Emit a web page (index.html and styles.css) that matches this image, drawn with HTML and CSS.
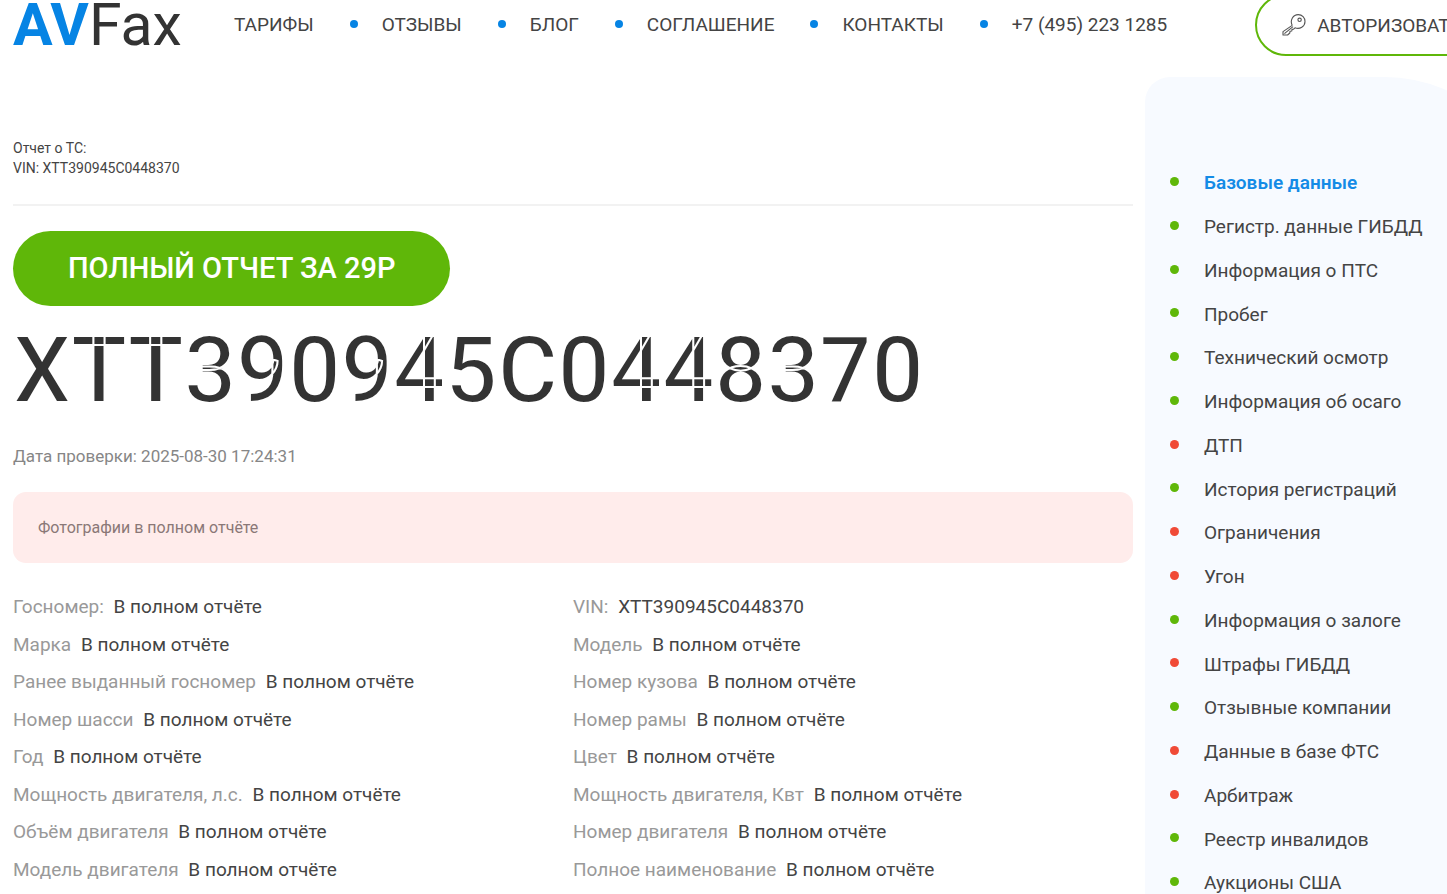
FILE: index.html
```html
<!DOCTYPE html>
<html lang="ru">
<head>
  <meta charset="UTF-8" />
  <meta name="viewport" content="width=device-width, initial-scale=1.0"/>
  <title>AVFax - Отчет XTT390945C0448370</title>
  <link rel="stylesheet" href="styles.css">
</head>
<body>
  <header class="header">
    <a href="#" class="logo"><b>AV</b>Fax</a>
    <nav class="nav">
      <a href="#">ТАРИФЫ</a>
      <a href="#">ОТЗЫВЫ</a>
      <a href="#">БЛОГ</a>
      <a href="#">СОГЛАШЕНИЕ</a>
      <a href="#">КОНТАКТЫ</a>
      <a href="tel:+74952231285">+7 (495) 223 1285</a>
    </nav>
    <button class="login-btn" type="button">
      <svg width="24" height="24" viewBox="0 0 24 24" fill="none" stroke="#555" stroke-width="1.1" stroke-linejoin="round">
        <path d="M10.2 12.4 C7.6 7.2 11.2 1.6 16.2 1.6 C20.2 1.6 23 4.8 23 8.4 C23 13.4 17.8 16.8 13 14.8 L11.6 16.2 L10 16.4 L9.8 18 L8 18.2 L7.8 20 L5.6 22 L1 22 L1 18.6 L10.2 12.4"/>
        <path d="M2.4 20.6 L11 13.6"/>
        <circle cx="17.6" cy="6.8" r="1.7"/>
      </svg>
      АВТОРИЗОВАТЬСЯ
    </button>
  </header>

  <div class="page">
    <main class="content">
      <div class="report-info">
        <p>Отчет о ТС:</p>
        <p>VIN: XTT390945C0448370</p>
      </div>

      <button class="buy-btn" type="button">ПОЛНЫЙ ОТЧЕТ ЗА 29Р</button>
      <h1>XTT390945C0448370</h1>
      <p class="check-date">Дата проверки: 2025-08-30 17:24:31</p>

      <div class="alert">Фотографии в полном отчёте</div>

      <ul class="specs">
        <li><span>Госномер:</span> В полном отчёте</li>
        <li><span>VIN:</span> XTT390945C0448370</li>
        <li><span>Марка</span> В полном отчёте</li>
        <li><span>Модель</span> В полном отчёте</li>
        <li><span>Ранее выданный госномер</span> В полном отчёте</li>
        <li><span>Номер кузова</span> В полном отчёте</li>
        <li><span>Номер шасси</span> В полном отчёте</li>
        <li><span>Номер рамы</span> В полном отчёте</li>
        <li><span>Год</span> В полном отчёте</li>
        <li><span>Цвет</span> В полном отчёте</li>
        <li><span>Мощность двигателя, л.с.</span> В полном отчёте</li>
        <li><span>Мощность двигателя, Квт</span> В полном отчёте</li>
        <li><span>Объём двигателя</span> В полном отчёте</li>
        <li><span>Номер двигателя</span> В полном отчёте</li>
        <li><span>Модель двигателя</span> В полном отчёте</li>
        <li><span>Полное наименование</span> В полном отчёте</li>
      </ul>
    </main>

    <aside class="sidebar">
      <ul class="menu">
        <li><a href="#" class="active">Базовые данные</a></li>
        <li><a href="#">Регистр. данные ГИБДД</a></li>
        <li><a href="#">Информация о ПТС</a></li>
        <li><a href="#">Пробег</a></li>
        <li><a href="#">Технический осмотр</a></li>
        <li><a href="#">Информация об осаго</a></li>
        <li class="red"><a href="#">ДТП</a></li>
        <li><a href="#">История регистраций</a></li>
        <li class="red"><a href="#">Ограничения</a></li>
        <li class="red"><a href="#">Угон</a></li>
        <li><a href="#">Информация о залоге</a></li>
        <li class="red"><a href="#">Штрафы ГИБДД</a></li>
        <li><a href="#">Отзывные компании</a></li>
        <li class="red"><a href="#">Данные в базе ФТС</a></li>
        <li class="red"><a href="#">Арбитраж</a></li>
        <li><a href="#">Реестр инвалидов</a></li>
        <li><a href="#">Аукционы США</a></li>
      </ul>
    </aside>
  </div>
</body>
</html>
```
FILE: styles.css
```css
* {
  box-sizing: border-box;
  margin: 0;
  padding: 0;
}
html {
  overflow: hidden;
}
body {
  font-family: Roboto, sans-serif;
  font-size: 19px;
  color: #444;
  background-color: #fff;
}
a {
  color: inherit;
  text-decoration: none;
}
ul {
  list-style: none;
}

/* header */
.header {
  display: flex;
  align-items: center;
  margin-top: -6px;
  padding-left: 13px;
  white-space: nowrap;
}
.logo {
  width: 221px;
  flex: none;
  font-size: 59px;
  line-height: 60px;
  color: #333;
}
.logo b {
  color: #0684e4;
}
.nav {
  display: flex;
  flex: none;
  padding-bottom: 2px;
}
.nav a {
  display: flex;
  align-items: center;
}
.nav a + a::before {
  content: "";
  width: 8px;
  height: 8px;
  margin: 0 24px 0 36px;
  border-radius: 50%;
  background-color: #0684e4;
}
.login-btn {
  display: flex;
  align-items: center;
  gap: 11px;
  flex: none;
  height: 62px;
  margin-left: 88px;
  padding: 0 26px 0 25px;
  border: 2px solid #5fb709;
  border-radius: 31px;
  background: none;
  font: inherit;
  color: #444;
  cursor: pointer;
}

/* layout */
.page {
  display: flex;
  gap: 12px;
  margin-top: 21px;
  padding-left: 13px;
}
.content {
  flex: 1;
}

/* report */
.report-info {
  padding: 61px 0 26px;
  border-bottom: 2px solid #f2f2f2;
  font-size: 14px;
  line-height: 20px;
}
.buy-btn {
  display: block;
  height: 75px;
  margin-top: 25px;
  padding: 0 55px 2px;
  border: none;
  border-radius: 38px;
  background-color: #5fb709;
  font: 500 29px Roboto, sans-serif;
  color: #fff;
  cursor: pointer;
}
h1 {
  margin-top: 10px;
  font-size: 92px;
  font-weight: 500;
  line-height: 110px;
  color: #333;
  -webkit-text-stroke: 2px #fff;
}
.check-date {
  margin-top: 18px;
  font-size: 17px;
  line-height: 24px;
  color: #868686;
}
.alert {
  margin: 24px 0 25px;
  padding: 23px 25px;
  border-radius: 13px;
  background-color: #ffeceb;
  font-size: 16px;
  line-height: 25px;
  color: #8a7877;
}
.specs {
  display: grid;
  grid-template-columns: 1fr 1fr;
  grid-auto-rows: 38px 37px;
  line-height: 37px;
}
.specs span {
  margin-right: 5px;
  color: #999;
}

/* sidebar */
.sidebar {
  flex: none;
  width: 390px;
  margin-right: -88px;
  padding: 84px 25px 60px;
  border-radius: 25px 150px 0 0;
  background-color: #f7faff;
}
.menu {
  display: grid;
  grid-auto-rows: 44px 44px 44px 43px;
  line-height: 44px;
}
.menu li {
  display: flex;
  align-items: center;
  gap: 25px;
}
.menu li::before {
  content: "";
  width: 9px;
  height: 9px;
  margin-bottom: 4px;
  border-radius: 50%;
  background-color: #5fb709;
}
.menu .red::before {
  background-color: #f04a37;
}
.menu .active {
  font-weight: 600;
  color: #148be6;
}
```
